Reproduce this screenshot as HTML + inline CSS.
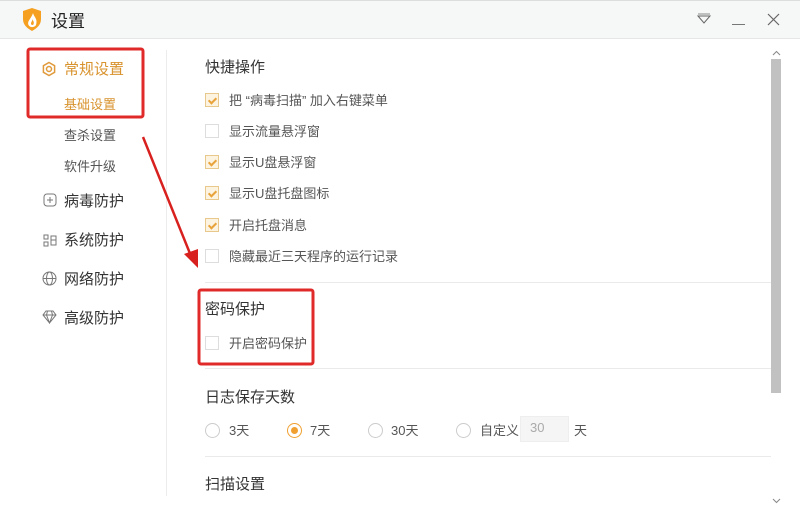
<!DOCTYPE html>
<html><head><meta charset="utf-8"><style>
*{margin:0;padding:0;box-sizing:border-box}
body{width:800px;height:526px;overflow:hidden;background:#fff;font-family:"Liberation Sans","Noto Sans CJK SC",sans-serif;color:#333;position:relative}
.a{position:absolute;white-space:nowrap}
.tb{left:0;top:0;width:800px;height:39px;background:#f6f7f7;border-bottom:1px solid #e6e6e6;border-top:1px solid #ddd}
.cb{position:absolute;width:14px;height:14px;border:1px solid #ddd;background:#fff}
.cb.on{background:#fdf3e1;border-color:#e8c98b}
.cb.on::after{content:"";position:absolute;left:4px;top:2px;width:3px;height:6px;border:solid #e8a33a;border-width:0 2px 2px 0;transform:rotate(45deg)}
.lbl{font-size:13px;color:#555}
.h{font-size:15px;color:#333}
.hr{position:absolute;left:205px;width:566px;height:1px;background:#eaeaea}
.rd{position:absolute;width:15px;height:15px;border:1px solid #ccc;border-radius:50%}
.rd.on{border-color:#f0a030}
.rd.on::after{content:"";position:absolute;left:3px;top:3px;width:7px;height:7px;border-radius:50%;background:#f0a030}
.nav{font-size:15px;color:#333}
.sub{font-size:13px;color:#555}
</style></head><body>
<div class="a tb"></div>
<svg class="a" style="left:22px;top:8px" width="20" height="23" viewBox="0 0 20 23"><path d="M10 0 L19 3 V11 C19 17 15 20 10 23 C5 20 1 17 1 11 V3Z" fill="#f5a020"/><path d="M11 5 C12 9 16 11 14 17 C13 19.5 8 20 6.5 17 C5 13 9 11 11 5Z" fill="#fff"/><path d="M10.5 11 C11 13 12.5 14 11.5 16.5 C10.5 17.5 9 17 9 15.5 C9 14 10.5 13 10.5 11Z" fill="#f5a020"/></svg>
<div class="a" style="left:51px;top:7px;font-size:17px;color:#222">设置</div>
<svg class="a" style="left:696px;top:13px" width="16" height="12"><line x1="2" y1="1" x2="14" y2="1" stroke="#888"/><path d="M2 3 L8 10 L14 3Z" fill="none" stroke="#666"/></svg>
<div class="a" style="left:732px;top:24px;width:13px;height:1px;background:#777"></div>
<svg class="a" style="left:767px;top:13px" width="13" height="13"><path d="M1 1L12 12M12 1L1 12" stroke="#666" stroke-width="1.2"/></svg>

<div class="a" style="left:166px;top:50px;width:1px;height:446px;background:#ececec"></div>
<svg class="a" style="left:41px;top:61px" width="16" height="16" viewBox="0 0 16 16"><circle cx="8" cy="8" r="2.5" fill="none" stroke="#e09a3a" stroke-width="1.5"/><path d="M8 1.5L13.6 4.7V11.3L8 14.5L2.4 11.3V4.7Z" fill="none" stroke="#e09a3a" stroke-width="1.5"/></svg>
<div class="a nav" style="left:64px;top:58px;color:#d8932e">常规设置</div>
<div class="a sub" style="left:64px;top:94px;color:#d8932e">基础设置</div>
<div class="a sub" style="left:64px;top:125px">查杀设置</div>
<div class="a sub" style="left:64px;top:156px">软件升级</div>
<svg class="a" style="left:43px;top:193px" width="14" height="14"><rect x="1" y="1" width="12" height="12" rx="3" fill="none" stroke="#777"/><path d="M7 4V10M4 7H10" stroke="#777"/></svg>
<div class="a nav" style="left:64px;top:190px">病毒防护</div>
<svg class="a" style="left:43px;top:233px" width="14" height="14"><path d="M1 2H5V6H1ZM1 9H5V13H1ZM8 3H13V12H8ZM8 7H13" fill="none" stroke="#777"/></svg>
<div class="a nav" style="left:64px;top:229px">系统防护</div>
<svg class="a" style="left:42px;top:271px" width="15" height="15"><circle cx="7.5" cy="7.5" r="6.5" fill="none" stroke="#777"/><ellipse cx="7.5" cy="7.5" rx="3" ry="6.5" fill="none" stroke="#777"/><path d="M1 7.5H14" stroke="#777"/></svg>
<div class="a nav" style="left:64px;top:268px">网络防护</div>
<svg class="a" style="left:42px;top:310px" width="15" height="14"><path d="M4 1H11L14 5L7.5 13L1 5ZM1 5H14M5.5 1L4.5 5L7.5 13L10.5 5L9.5 1" fill="none" stroke="#777"/></svg>
<div class="a nav" style="left:64px;top:307px">高级防护</div>

<div class="a h" style="left:205px;top:56px">快捷操作</div>
<div class="cb on" style="left:205px;top:93px"></div><div class="a lbl" style="left:229px;top:90px">把 “病毒扫描” 加入右键菜单</div>
<div class="cb" style="left:205px;top:124px"></div><div class="a lbl" style="left:229px;top:121px">显示流量悬浮窗</div>
<div class="cb on" style="left:205px;top:155px"></div><div class="a lbl" style="left:229px;top:152px">显示U盘悬浮窗</div>
<div class="cb on" style="left:205px;top:186px"></div><div class="a lbl" style="left:229px;top:183px">显示U盘托盘图标</div>
<div class="cb on" style="left:205px;top:218px"></div><div class="a lbl" style="left:229px;top:215px">开启托盘消息</div>
<div class="cb" style="left:205px;top:249px"></div><div class="a lbl" style="left:229px;top:246px">隐藏最近三天程序的运行记录</div>
<div class="hr" style="top:282px"></div>
<div class="a h" style="left:205px;top:298px">密码保护</div>
<div class="cb" style="left:205px;top:336px"></div><div class="a lbl" style="left:229px;top:333px">开启密码保护</div>
<div class="hr" style="top:368px"></div>
<div class="a h" style="left:205px;top:386px">日志保存天数</div>
<div class="rd" style="left:205px;top:423px"></div><div class="a lbl" style="left:229px;top:420px">3天</div>
<div class="rd on" style="left:287px;top:423px"></div><div class="a lbl" style="left:310px;top:420px">7天</div>
<div class="rd" style="left:368px;top:423px"></div><div class="a lbl" style="left:391px;top:420px">30天</div>
<div class="rd" style="left:456px;top:423px"></div><div class="a lbl" style="left:480px;top:420px">自定义</div>
<div class="a" style="left:520px;top:416px;width:49px;height:26px;background:#f5f5f5;border:1px solid #eee"></div>
<div class="a lbl" style="left:530px;top:420px;color:#aaa">30</div>
<div class="a lbl" style="left:574px;top:420px">天</div>
<div class="hr" style="top:456px"></div>
<div class="a h" style="left:205px;top:473px">扫描设置</div>

<div class="a" style="left:771px;top:59px;width:10px;height:334px;background:#c1c1c1"></div>
<svg class="a" style="left:772px;top:50px" width="9" height="6"><path d="M1 5L4.5 1.5L8 5" fill="none" stroke="#888"/></svg>
<svg class="a" style="left:772px;top:498px" width="9" height="6"><path d="M1 1L4.5 4.5L8 1" fill="none" stroke="#888"/></svg>

<svg class="a" style="left:0;top:0" width="800" height="526">
<rect x="28" y="49" width="115" height="68" rx="2" fill="none" stroke="#e02a2a" stroke-width="3"/>
<rect x="199" y="290" width="114" height="74" rx="2" fill="none" stroke="#e02a2a" stroke-width="3"/>
<path d="M143 137 L191 256" stroke="#d8201f" stroke-width="2.5"/>
<path d="M184 254 L198 268 L198 249Z" fill="#d8201f"/>
</svg>
</body></html>
